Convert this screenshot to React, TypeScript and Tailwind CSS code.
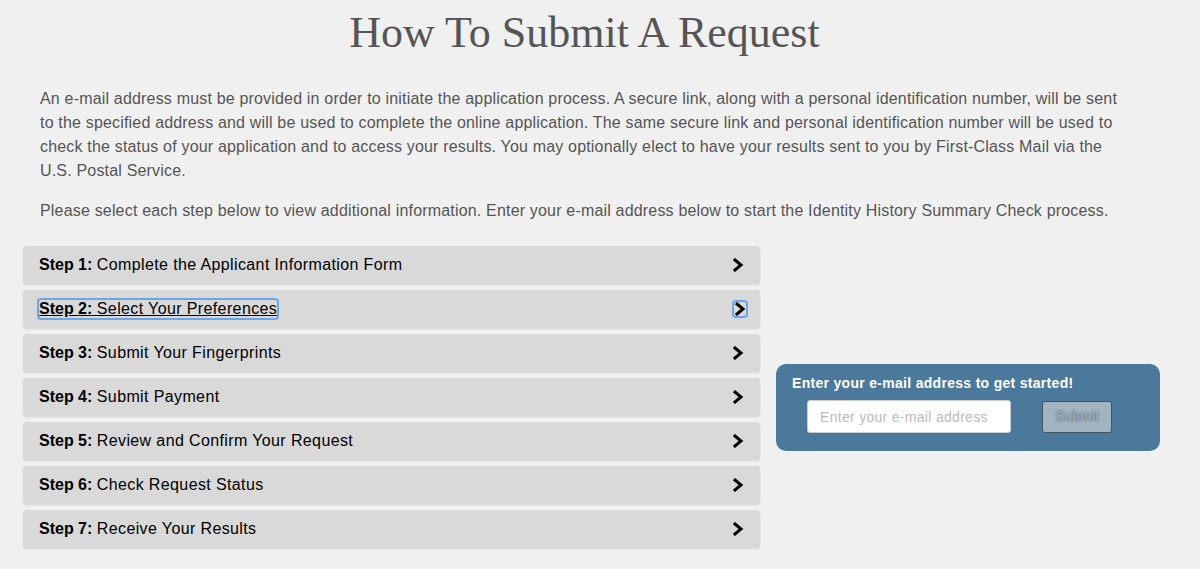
import React from "react";

const steps = [
  ["Step 1:", "Complete the Applicant Information Form"],
  ["Step 2:", "Select Your Preferences"],
  ["Step 3:", "Submit Your Fingerprints"],
  ["Step 4:", "Submit Payment"],
  ["Step 5:", "Review and Confirm Your Request"],
  ["Step 6:", "Check Request Status"],
  ["Step 7:", "Receive Your Results"],
];

function Chevron() {
  return (
    <svg width="12" height="14" viewBox="0 0 12 14" className="block">
      <path d="M3 2 L9 7 L3 12" fill="none" stroke="#000" strokeWidth="3" strokeLinecap="square" strokeLinejoin="miter" />
    </svg>
  );
}

export default function App() {
  return (
    <div
      className="w-[1200px] h-[569px] overflow-hidden bg-[#f0f0f0] text-[#555]"
      style={{ fontFamily: '"Liberation Sans", Arial, sans-serif' }}
    >
      <div className="px-[23px] w-[1183px]">
        <h1
          className="pt-[9px] text-center text-[44px] leading-[48px] text-[#555] pr-[14px]"
          style={{ fontFamily: '"Liberation Serif", Georgia, serif' }}
        >
          How To Submit A Request
        </h1>
        <div className="pl-[17px] pr-[35px] mt-[30px] text-[16px] leading-[24px] tracking-[0.18px] text-[#555]">
          <p>
            An e-mail address must be provided in order to initiate the application process. A secure link, along with a personal identification number, will be sent to the specified address and will be used to complete the online application. The same secure link and personal identification number will be used to check the status of your application and to access your results. You may optionally elect to have your results sent to you by First-Class Mail via the U.S. Postal Service.
          </p>
          <p className="mt-[16px]">
            Please select each step below to view additional information. Enter your e-mail address below to start the Identity History Summary Check process.
          </p>
        </div>
        <div className="flex gap-[16px] mt-[23px]">
          <div className="w-[737px] shrink-0 flex flex-col gap-[6px]">
            {steps.map(([a, b], i) => (
              <div
                key={i}
                className="h-[38px] rounded-[4px] bg-[#d9d9d9] shadow-[0_1px_2px_rgba(0,0,0,0.12)] flex items-center justify-between pl-[16px] pr-[16px] text-[16px] text-black"
              >
                <span
                  className={
                    i === 1
                      ? "underline outline outline-2 outline-[#6aa5f0] rounded-[2px] leading-[18px]"
                      : "leading-[18px]"
                  }
                >
                  <b>{a}</b> <span className="tracking-[0.38px]">{b}</span>
                </span>
                <span
                  className={
                    i === 1
                      ? "outline outline-2 outline-[#6aa5f0] rounded-[2px] mr-[-2px]"
                      : ""
                  }
                >
                  <Chevron />
                </span>
              </div>
            ))}
          </div>
          <div className="self-start shrink-0 mt-[118px] w-[384px] h-[87px] rounded-[10px] bg-[#4a799b] pl-[16px] pt-[11px]">
            <div className="text-white font-bold text-[14px] leading-[16px] tracking-[0.3px]">
              Enter your e-mail address to get started!
            </div>
            <div className="flex items-center mt-[9px] pl-[15px]">
              <input
                className="w-[204px] h-[33px] rounded-[3px] bg-white border border-[#ccc] px-[12px] text-[14px] tracking-[0.3px] placeholder:text-[#bbb] outline-none"
                placeholder="Enter your e-mail address"
              />
              <button
                className="ml-[31px] w-[70px] h-[32px] rounded-[3px] bg-[#a3b4c1] border border-[#3e5566] text-[14px] text-[#a3b4c1]"
                style={{ textShadow: "0 0 2px #2d3f4d" }}
              >
                Submit
              </button>
            </div>
          </div>
        </div>
      </div>
    </div>
  );
}
